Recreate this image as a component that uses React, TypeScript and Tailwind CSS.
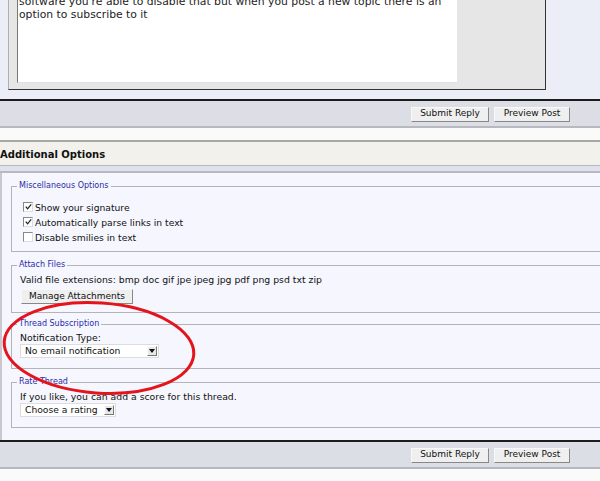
import React from "react";

const font = { fontFamily: '"DejaVu Sans", Verdana, sans-serif' };

function Btn({ label, w }: { label: string; w: string }) {
  return (
    <div
      className={`${w} h-[15px] flex items-center justify-center text-[9px] text-[#111] bg-[#efefef] border border-[#f8f8f8] border-r-[#888] border-b-[#888]`}
    >
      {label}
    </div>
  );
}

function ButtonBar() {
  return (
    <div className="h-[29px] bg-[#dcdee6] border-t-2 border-t-[#1c1c1c] border-b-2 border-b-[#b8b8be] flex items-center justify-end gap-[5px] pr-[30px] pt-[1px]">
      <Btn label="Submit Reply" w="w-[78px]" />
      <Btn label="Preview Post" w="w-[76px]" />
    </div>
  );
}

function Check({ checked, label }: { checked: boolean; label: string }) {
  return (
    <div className="flex items-center h-[15px] gap-[2px] pl-[3px]">
      <div className="w-[10px] h-[10px] bg-white border border-[#888] border-r-[#ddd] border-b-[#ddd] relative -mt-[2px]">
        {checked && (
          <svg viewBox="0 0 10 10" className="absolute left-0 top-0 w-[9px] h-[9px]">
            <path d="M2 4 L4 6.5 L8 1.5" fill="none" stroke="#222" strokeWidth="1.4" />
          </svg>
        )}
      </div>
      <span className="text-[9.2px] text-[#111]">{label}</span>
    </div>
  );
}

function Select({ label, w }: { label: string; w: string }) {
  return (
    <div className={`${w} h-[14px] bg-white border border-[#ddd] flex items-center justify-between pl-[4px] pr-[1px]`}>
      <span className="text-[9.2px] text-[#111]">{label}</span>
      <div className="w-[10px] h-[10px] bg-[#e8e8e8] border border-[#fff] border-r-[#777] border-b-[#777] flex items-center justify-center">
        <svg viewBox="0 0 6 4" className="w-[6px] h-[4px]">
          <path d="M0 0 H6 L3 4 Z" fill="#111" />
        </svg>
      </div>
    </div>
  );
}

function Box({ legend, children, h }: { legend: string; children: React.ReactNode; h: string }) {
  return (
    <fieldset className={`${h} ml-[9px] -mr-[40px] border border-[#b4b4b8] px-[8px] pt-0`}>
      <legend className="px-[2px] -ml-[3px] text-[8px] text-[#2a2aa8] leading-[10px]">{legend}</legend>
      {children}
    </fieldset>
  );
}

export default function App() {
  return (
    <div className="w-[600px] h-[481px] overflow-hidden bg-[#fafafa] relative" style={font}>
      <div className="h-[99px] bg-[#eceef7] pl-[8px]">
        <div className="w-[538px] h-[90px] bg-[#e6e6e6] border-l border-l-[#b0b0b0] border-r border-r-[#333] border-b border-b-[#333] pl-[8px]">
          <div className="w-[440px] h-[83px] bg-white border-l border-l-[#777] border-b border-b-[#e0e0e0] pl-[1px] flex flex-col overflow-hidden">
            <div className="-mt-[4px] text-[10.8px] leading-[12.5px] text-[#222]">
              <div>software you're able to disable that but when you post a new topic there is an</div>
              <div>option to subscribe to it</div>
            </div>
          </div>
        </div>
      </div>
      <ButtonBar />
      <div className="h-[12px]" />
      <div className="h-[26px] bg-[#f2f1ec] border-t-2 border-t-[#a8a8a8] border-b border-b-[#b8b8b8] flex items-center font-bold text-[10px] text-[#111] pt-[1px]">
        Additional Options
      </div>
      <div className="h-[7px] bg-[#dfe1ef] border-b-2 border-b-[#b8b8be]" />
      <div className="bg-[#f5f6fe] border-l-2 border-l-[#c8c8d0] pt-[8px] pb-[12px] flex flex-col">
        <Box legend="Miscellaneous Options" h="h-[71px]">
          <div className="pt-[9px]">
            <Check checked label="Show your signature" />
            <Check checked label="Automatically parse links in text" />
            <Check checked={false} label="Disable smilies in text" />
          </div>
        </Box>
        <div className="h-[8px]" />
        <Box legend="Attach Files" h="h-[53px]">
          <div className="text-[9.3px] text-[#111] pt-[4px] leading-[12px]">
            Valid file extensions: bmp doc gif jpe jpeg jpg pdf png psd txt zip
          </div>
          <div className="mt-[3px] pl-[1px]">
            <Btn label="Manage Attachments" w="w-[112px]" />
          </div>
        </Box>
        <div className="h-[6px]" />
        <Box legend="Thread Subscription" h="h-[50px]">
          <div className="text-[9.3px] text-[#111] pt-[3px] leading-[12px]">Notification Type:</div>
          <Select label="No email notification" w="w-[139px]" />
        </Box>
        <div className="h-[8px]" />
        <Box legend="Rate Thread" h="h-[51px]">
          <div className="text-[9.3px] text-[#111] pt-[4px] leading-[12px]">If you like, you can add a score for this thread.</div>
          <Select label="Choose a rating" w="w-[96px]" />
        </Box>
      </div>
      <ButtonBar />
      <svg className="absolute left-0 top-0 pointer-events-none" width="600" height="481">
        <ellipse cx="99" cy="348" rx="95" ry="45" fill="none" stroke="#e4141c" strokeWidth="3" transform="rotate(4 99 348)" />
      </svg>
    </div>
  );
}
